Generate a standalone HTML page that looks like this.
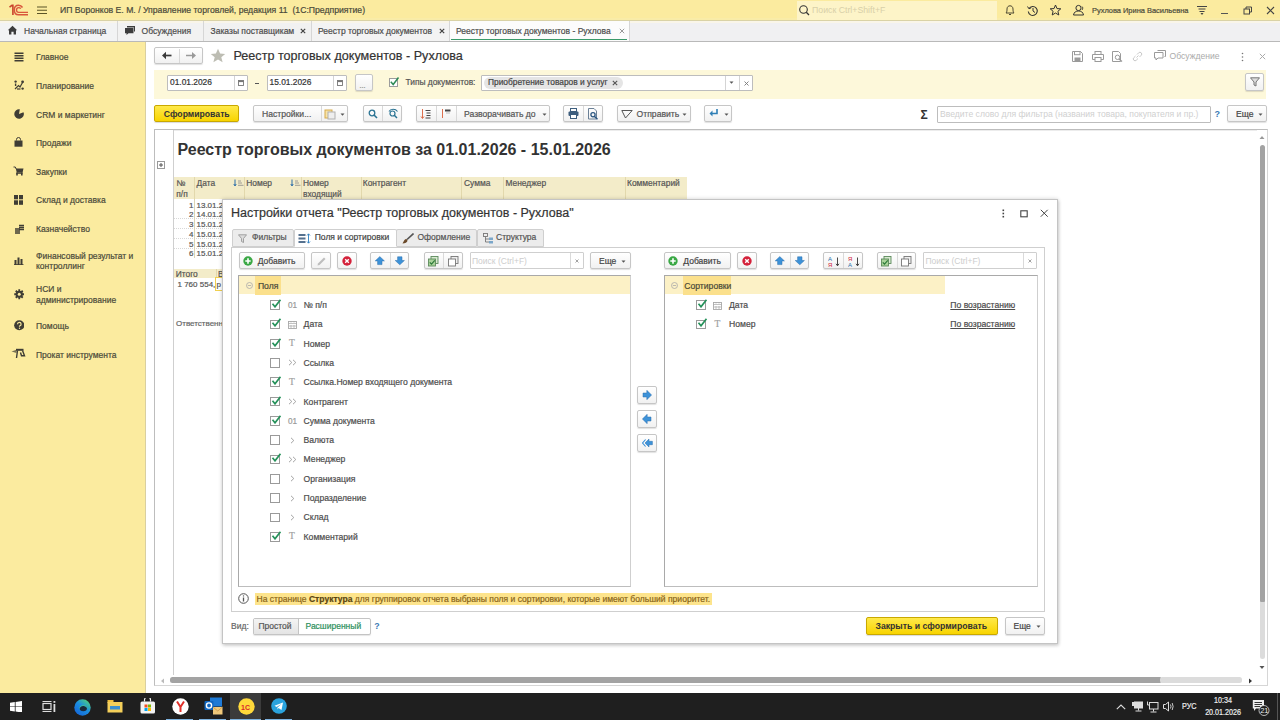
<!DOCTYPE html><html><head><meta charset="utf-8"><style>
*{margin:0;padding:0;box-sizing:border-box}
html,body{width:1280px;height:720px;overflow:hidden;background:#fff;font-family:"Liberation Sans",sans-serif}
.a{position:absolute}
.t{position:absolute;white-space:nowrap;line-height:1;-webkit-text-stroke:0.2px currentColor}
.btn{position:absolute;border:1px solid #c6c6c6;border-radius:2px;background:linear-gradient(#ffffff,#f1f1f1);box-shadow:0 1px 1px rgba(0,0,0,.12)}
.inp{position:absolute;border:1px solid #bdbdbd;background:#fff;border-radius:1px}
</style></head><body><div class="a " style="left:0px;top:0px;width:1280px;height:20px;background:#fbeb9f;"></div>
<div class="a " style="left:0px;top:18px;width:1280px;height:2px;background:#f9eca8;"></div>
<svg class="a" style="left:8px;top:4px;" width="22" height="13" viewBox="0 0 22 13">
<path d="M1.5 3.2 L4 1.3 L4.9 1.3 L4.9 11" stroke="#c8442b" stroke-width="1.6" fill="none"/>
<path d="M14.5 3.5 C13.5 1.8 12 1.2 10.5 1.2 C8 1.2 6.3 3.2 6.3 6 C6.3 8.8 8 10.8 10.5 10.8 L20 10.8" stroke="#d9553b" stroke-width="1.5" fill="none"/>
<path d="M12.8 4.6 C12.2 3.9 11.5 3.6 10.7 3.6 C9.3 3.6 8.5 4.6 8.5 6 C8.5 7.4 9.3 8.4 10.7 8.4 L20 8.4" stroke="#d9553b" stroke-width="1.3" fill="none"/>
</svg>
<svg class="a" style="left:36px;top:5px;" width="12" height="10" viewBox="0 0 12 10"><path d="M1 2h10M1 5.3h10M1 8.5h10" stroke="#5b5426" stroke-width="1.1"/></svg>
<div class="t" style="left:60px;top:6.00px;font-size:8.67px;color:#4a4a3a;font-weight:400;">ИП Воронков Е. М. / Управление торговлей, редакция 11&nbsp; (1С:Предприятие)</div>
<div class="a " style="left:797px;top:1px;width:200px;height:18.5px;background:#fdf4c8;"></div>
<svg class="a" style="left:798px;top:4px;" width="13" height="13" viewBox="0 0 13 13"><circle cx="5.5" cy="5.5" r="3.8" stroke="#333" stroke-width="1.1" fill="none"/><path d="M8.3 8.3 L11 11" stroke="#333" stroke-width="1.3"/></svg>
<div class="t" style="left:812px;top:6.00px;font-size:8.75px;color:#d8d0a8;font-weight:400;-webkit-text-stroke:0;">Поиск Ctrl+Shift+F</div>
<svg class="a" style="left:1004px;top:4px;" width="12" height="12" viewBox="0 0 12 12"><path d="M2 9 C3 8 3 6.5 3 5 C3 3 4.3 1.8 6 1.8 C7.7 1.8 9 3 9 5 C9 6.5 9 8 10 9 Z" stroke="#4a4630" stroke-width="1" fill="none"/><path d="M5 10.5 h2" stroke="#4a4630" stroke-width="1"/></svg>
<svg class="a" style="left:1026px;top:3.5px;" width="14" height="13" viewBox="0 0 14 13"><path d="M3 4.5 A4.5 4.5 0 1 1 2.3 7.5" stroke="#333" stroke-width="1.1" fill="none"/><path d="M1.5 2.5 L3 4.8 L5.3 3.7" stroke="#333" stroke-width="1" fill="none"/><path d="M7 4 V7 L9 8.5" stroke="#333" stroke-width="1" fill="none"/></svg>
<svg class="a" style="left:1049px;top:4px;" width="13" height="12" viewBox="0 0 13 12"><path d="M6.5 1 L8 4.6 L11.8 4.8 L8.9 7.3 L9.8 11 L6.5 9 L3.2 11 L4.1 7.3 L1.2 4.8 L5 4.6 Z" stroke="#333" stroke-width="1" fill="none" stroke-linejoin="round"/></svg>
<svg class="a" style="left:1071.5px;top:4px;" width="14" height="12" viewBox="0 0 14 12"><circle cx="6.5" cy="4" r="2.6" stroke="#333" stroke-width="1" fill="none"/><path d="M1.5 11 C2 8 4 7 6.5 7 C9 7 11 8 11.5 11 Z" stroke="#333" stroke-width="1" fill="none"/><path d="M10 2.5 C11 3 11 5 10 6" stroke="#333" stroke-width="0.9" fill="none"/></svg>
<div class="t" style="left:1092px;top:7.00px;font-size:7.45px;color:#4a4a3a;font-weight:400;">Рухлова Ирина Васильевна</div>
<svg class="a" style="left:1196px;top:4px;" width="12" height="12" viewBox="0 0 12 12"><path d="M1 2.5h10M2.5 5h7M3.5 7.5h5" stroke="#444" stroke-width="1"/><path d="M4.5 9 L7.5 9 L6 11 Z" fill="#444"/></svg>
<div class="a " style="left:1221px;top:12.5px;width:7px;height:1.2px;background:#555;"></div>
<svg class="a" style="left:1243px;top:6px;" width="10" height="9" viewBox="0 0 10 9"><rect x="1" y="3" width="5.5" height="5" stroke="#444" stroke-width="1" fill="none"/><path d="M3 3 V1 H8.5 V6 H6.5" stroke="#444" stroke-width="1" fill="none"/></svg>
<svg class="a" style="left:1266px;top:5.5px;" width="9" height="9" viewBox="0 0 9 9"><path d="M1 1 L8 8 M8 1 L1 8" stroke="#444" stroke-width="1.1"/></svg>
<div class="a " style="left:0px;top:20px;width:1280px;height:21px;background:#f0f0f2;"></div>
<div class="a " style="left:0px;top:20px;width:1280px;height:1px;background:#d9d2a6;"></div>
<div class="a " style="left:0px;top:21px;width:1280px;height:1.5px;background:#f9f5e9;"></div>
<div class="a " style="left:0px;top:41px;width:1280px;height:1px;background:#b9b9b9;"></div>
<div class="a " style="left:0px;top:22.5px;width:117px;height:18.5px;background:#f2f3f4;"></div>
<div class="a " style="left:118px;top:22.5px;width:84.5px;height:18.5px;background:#f2f2f2;"></div>
<div class="a " style="left:203px;top:22.5px;width:108px;height:18.5px;background:#f1f1f1;"></div>
<div class="a " style="left:312px;top:22.5px;width:137px;height:18.5px;background:#f3f3f3;"></div>
<div class="a " style="left:117px;top:21px;width:1px;height:20px;background:#d6d6d6;"></div>
<div class="a " style="left:202.5px;top:21px;width:1px;height:20px;background:#d6d6d6;"></div>
<div class="a " style="left:311px;top:21px;width:1px;height:20px;background:#d6d6d6;"></div>
<div class="a " style="left:449px;top:21px;width:1px;height:20px;background:#d6d6d6;"></div>
<div class="a " style="left:450px;top:21px;width:178.5px;height:20px;background:#fcfcfc;"></div>
<div class="a " style="left:628.5px;top:21px;width:1px;height:20px;background:#d6d6d6;"></div>
<div class="a " style="left:451px;top:38.5px;width:175.5px;height:1.4px;background:#3a9a6a;"></div>
<svg class="a" style="left:6.5px;top:25px;" width="11" height="10" viewBox="0 0 11 10"><path d="M0.8 5.2 L5.5 0.8 L10.2 5.2 L9 5.2 L9 9.5 L6.6 9.5 L6.6 6.8 L4.4 6.8 L4.4 9.5 L2 9.5 L2 5.2 Z" fill="#3d3d3d"/></svg>
<div class="t" style="left:24px;top:27.00px;font-size:8.5px;color:#4d4d4d;font-weight:400;">Начальная страница</div>
<svg class="a" style="left:123.5px;top:25px;" width="12" height="11" viewBox="0 0 12 11"><path d="M3 1 H11 V6.5 H10 V2.5 H3 Z" fill="#3d3d3d"/><path d="M1 3 H9.5 V8.2 H4.5 L2.5 10 L2.5 8.2 H1 Z" fill="#3d3d3d"/></svg>
<div class="t" style="left:141.6px;top:27.00px;font-size:8.5px;color:#4d4d4d;font-weight:400;">Обсуждения</div>
<div class="t" style="left:210.6px;top:27.00px;font-size:8.5px;color:#4d4d4d;font-weight:400;">Заказы поставщикам</div>
<svg class="a" style="left:300px;top:28px;" width="6" height="6" viewBox="0 0 6 6"><path d="M0.8 0.8 L5.2 5.2 M5.2 0.8 L0.8 5.2" stroke="#444" stroke-width="1.2"/></svg>
<div class="t" style="left:318px;top:27.00px;font-size:8.5px;color:#4d4d4d;font-weight:400;">Реестр торговых документов</div>
<svg class="a" style="left:438.5px;top:28px;" width="6" height="6" viewBox="0 0 6 6"><path d="M0.8 0.8 L5.2 5.2 M5.2 0.8 L0.8 5.2" stroke="#444" stroke-width="1.2"/></svg>
<div class="t" style="left:456px;top:27.00px;font-size:8.5px;color:#4d4d4d;font-weight:400;">Реестр торговых документов - Рухлова</div>
<svg class="a" style="left:618.5px;top:28px;" width="6" height="6" viewBox="0 0 6 6"><path d="M0.8 0.8 L5.2 5.2 M5.2 0.8 L0.8 5.2" stroke="#999" stroke-width="1"/></svg>
<div class="a " style="left:0px;top:42px;width:145px;height:651px;background:#fbeb9f;"></div>
<div class="a " style="left:145px;top:42px;width:1px;height:651px;background:#d9cf9f;"></div>
<div class="t" style="left:36px;top:53.00px;font-size:8.5px;color:#4a4a3a;font-weight:400;">Главное</div>
<div class="t" style="left:36px;top:82.00px;font-size:8.5px;color:#4a4a3a;font-weight:400;">Планирование</div>
<div class="t" style="left:36px;top:111.00px;font-size:8.5px;color:#4a4a3a;font-weight:400;">CRM и маркетинг</div>
<div class="t" style="left:36px;top:139.00px;font-size:8.5px;color:#4a4a3a;font-weight:400;">Продажи</div>
<div class="t" style="left:36px;top:168.00px;font-size:8.5px;color:#4a4a3a;font-weight:400;">Закупки</div>
<div class="t" style="left:36px;top:196.00px;font-size:8.5px;color:#4a4a3a;font-weight:400;">Склад и доставка</div>
<div class="t" style="left:36px;top:225.00px;font-size:8.5px;color:#4a4a3a;font-weight:400;">Казначейство</div>
<div class="t" style="left:36px;top:252.00px;font-size:8.5px;color:#4a4a3a;font-weight:400;">Финансовый результат и</div>
<div class="t" style="left:36px;top:262.00px;font-size:8.5px;color:#4a4a3a;font-weight:400;">контроллинг</div>
<div class="t" style="left:36px;top:285.00px;font-size:8.5px;color:#4a4a3a;font-weight:400;">НСИ и</div>
<div class="t" style="left:36px;top:296.00px;font-size:8.5px;color:#4a4a3a;font-weight:400;">администрирование</div>
<div class="t" style="left:36px;top:322.00px;font-size:8.5px;color:#4a4a3a;font-weight:400;">Помощь</div>
<div class="t" style="left:36px;top:351.00px;font-size:8.5px;color:#4a4a3a;font-weight:400;">Прокат инструмента</div>
<svg class="a" style="left:13.5px;top:51.5px;" width="10" height="10" viewBox="0 0 10 10"><path d="M0.5 1.2h9M0.5 3.7h9M0.5 6.2h9M0.5 8.7h9" stroke="#3f3d35" stroke-width="1.4"/></svg>
<svg class="a" style="left:13.5px;top:80px;" width="10" height="10" viewBox="0 0 10 10"><circle cx="1.6" cy="1.6" r="1.2" fill="#3f3d35"/><rect x="0.9" y="3.5" width="1.4" height="2.5" fill="#3f3d35"/><path d="M1 9 L4.5 5.5 L6 7 L8.8 2" stroke="#3f3d35" stroke-width="1.2" fill="none"/><circle cx="8.6" cy="1.8" r="1.4" fill="#3f3d35"/><circle cx="8.6" cy="8.6" r="1.2" fill="#3f3d35"/><rect x="3" y="8.4" width="3.5" height="1.2" fill="#3f3d35"/></svg>
<svg class="a" style="left:13.5px;top:109.2px;" width="10" height="10" viewBox="0 0 10 10"><path d="M5 5 L9.5 3.2 A4.8 4.8 0 1 1 5.8 0.3 Z" fill="#3f3d35"/></svg>
<svg class="a" style="left:14px;top:137px;" width="9" height="10" viewBox="0 0 9 10"><path d="M2.5 3.5 V2.5 A2 2 0 0 1 6.5 2.5 V3.5" stroke="#3f3d35" stroke-width="1" fill="none"/><rect x="0.5" y="3.5" width="8" height="6.2" fill="#3f3d35"/></svg>
<svg class="a" style="left:13px;top:166px;" width="11" height="10" viewBox="0 0 11 10"><path d="M0.5 1 H2.3 L3.2 3" stroke="#3f3d35" stroke-width="1" fill="none"/><path d="M2.8 2.5 H10.5 L9.5 6.8 H3.8 Z" fill="#3f3d35"/><rect x="3.2" y="6.5" width="1.6" height="3" fill="#3f3d35"/><rect x="8" y="6.5" width="1.6" height="3" fill="#3f3d35"/><rect x="3.5" y="6.8" width="6" height="1" fill="#3f3d35"/></svg>
<svg class="a" style="left:14px;top:194.5px;" width="9" height="10" viewBox="0 0 9 10"><rect x="0" y="0" width="4" height="4.3" fill="#3f3d35"/><rect x="5" y="0" width="4" height="4.3" fill="#3f3d35"/><rect x="0" y="5.3" width="4" height="4.5" fill="#3f3d35"/><rect x="5" y="5.3" width="4" height="4.5" fill="#3f3d35"/></svg>
<svg class="a" style="left:13.5px;top:223.5px;" width="11" height="11" viewBox="0 0 11 11"><path d="M5 1.5 H10 M5 3.5 H10 M5 5.5 H10" stroke="#3f3d35" stroke-width="1.4"/><path d="M1 5 H6 M1 7 H6 M1 9 H6" stroke="#3f3d35" stroke-width="1.4"/></svg>
<svg class="a" style="left:14px;top:256.5px;" width="10" height="8" viewBox="0 0 10 8"><rect x="0.5" y="3" width="2" height="5" fill="#3f3d35"/><rect x="3.5" y="0.5" width="2" height="7.5" fill="#3f3d35"/><rect x="6.5" y="2" width="2" height="6" fill="#3f3d35"/><rect x="0" y="7.2" width="9.5" height="0.9" fill="#3f3d35"/></svg>
<svg class="a" style="left:13.5px;top:289px;" width="10.5" height="10.5" viewBox="0 0 10.5 10.5"><g transform="translate(5.25 5.25)"><circle r="3.6" fill="#3f3d35"/><path d="M0 -5 V5 M-5 0 H5 M-3.5 -3.5 L3.5 3.5 M3.5 -3.5 L-3.5 3.5" stroke="#3f3d35" stroke-width="1.8"/><circle r="1.5" fill="#fbeb9f"/></g></svg>
<svg class="a" style="left:13.5px;top:320px;" width="10.5" height="10.5" viewBox="0 0 10.5 10.5"><circle cx="5.25" cy="5.25" r="5.1" fill="#3f3d35"/><path d="M3.5 4.2 A1.8 1.8 0 1 1 5.5 6 V6.8" stroke="#fbeb9f" stroke-width="1.2" fill="none"/><circle cx="5.5" cy="8.3" r="0.7" fill="#fbeb9f"/></svg>
<svg class="a" style="left:11px;top:348px;" width="16" height="11" viewBox="0 0 16 11"><path d="M0.5 3.5 L5.5 1.8 L5.5 5 Z" fill="#3f3d35" opacity="0.7"/><rect x="5" y="0.8" width="7.5" height="2" fill="#3f3d35"/><path d="M6.5 2.5 L5.5 10 M11.5 2.5 L13.5 7.8 L10.5 7.8 L9.5 4.5" stroke="#3f3d35" stroke-width="1.4" fill="none"/></svg>
<div class="btn" style="left:154px;top:47px;width:48.5px;height:16.6px"></div>
<div class="a " style="left:178.5px;top:48.5px;width:1px;height:14px;background:#d8d8d8;"></div>
<svg class="a" style="left:161px;top:50px;" width="12" height="11" viewBox="0 0 12 11"><path d="M3 5.5 H10.5" stroke="#3a3a3a" stroke-width="1.7"/><path d="M1 5.5 L5 1.8 L5 9.2 Z" fill="#3a3a3a"/></svg>
<svg class="a" style="left:185px;top:50px;" width="12" height="11" viewBox="0 0 12 11"><path d="M1 5.5 H8.5" stroke="#9a9a9a" stroke-width="1.5"/><path d="M11 5.5 L7 2 L7 9 Z" fill="#9a9a9a"/></svg>
<svg class="a" style="left:210px;top:47.5px;" width="16" height="15" viewBox="0 0 16 15"><path d="M8 0.8 L10.1 5.5 L15.2 5.9 L11.3 9.2 L12.6 14.2 L8 11.5 L3.4 14.2 L4.7 9.2 L0.8 5.9 L5.9 5.5 Z" fill="#bdbdb3"/></svg>
<div class="t" style="left:233.5px;top:50.00px;font-size:12.6px;color:#333;font-weight:400;">Реестр торговых документов - Рухлова</div>
<svg class="a" style="left:1071.5px;top:50.5px;" width="11" height="11" viewBox="0 0 11 11"><path d="M0.5 0.5 H8.5 L10.5 2.5 V10.5 H0.5 Z" stroke="#9a9a9a" stroke-width="1" fill="none"/><rect x="2.5" y="0.5" width="5.5" height="3.2" stroke="#9a9a9a" stroke-width="1" fill="none"/><rect x="2.5" y="6.5" width="6" height="4" fill="#9a9a9a"/></svg>
<svg class="a" style="left:1091.5px;top:50.5px;" width="12" height="11" viewBox="0 0 12 11"><rect x="3" y="0.5" width="6" height="3" stroke="#9a9a9a" stroke-width="1" fill="none"/><path d="M0.5 3.5 H11.5 V8.5 H0.5 Z" stroke="#9a9a9a" stroke-width="1" fill="none"/><rect x="3" y="6.5" width="6" height="4" stroke="#9a9a9a" stroke-width="1" fill="#fff"/></svg>
<svg class="a" style="left:1111.5px;top:50.5px;" width="11" height="11" viewBox="0 0 11 11"><path d="M0.5 0.5 H6.5 L8.5 2.5 V10.5 H0.5 Z" stroke="#9a9a9a" stroke-width="1" fill="none"/><circle cx="5.5" cy="6.3" r="2.2" stroke="#9a9a9a" stroke-width="1" fill="none"/><path d="M7 8 L10 10.5" stroke="#9a9a9a" stroke-width="1.3"/></svg>
<svg class="a" style="left:1132px;top:50.5px;" width="11" height="11" viewBox="0 0 11 11"><path d="M4.5 6.5 L6.5 4.5 M3.5 5 L1.8 6.7 A1.6 1.6 0 0 0 4.3 9.2 L6 7.5 M7.5 6 L9.2 4.3 A1.6 1.6 0 0 0 6.7 1.8 L5 3.5" stroke="#c9c9c9" stroke-width="1" fill="none"/></svg>
<svg class="a" style="left:1153.5px;top:50px;" width="12" height="11" viewBox="0 0 12 11"><path d="M3.5 0.5 H11.5 V6.5 H10.5" stroke="#9a9a9a" stroke-width="1" fill="none"/><path d="M0.5 2.5 H9 V8 H4 L2 10 V8 H0.5 Z" stroke="#9a9a9a" stroke-width="1" fill="none"/></svg>
<div class="t" style="left:1169.5px;top:52.00px;font-size:8.6px;color:#ababab;font-weight:400;-webkit-text-stroke:0;">Обсуждение</div>
<svg class="a" style="left:1240.5px;top:51.5px;" width="3" height="10" viewBox="0 0 3 10"><circle cx="1.5" cy="1.5" r="0.8" fill="#777"/><circle cx="1.5" cy="5" r="0.8" fill="#777"/><circle cx="1.5" cy="8.5" r="0.8" fill="#777"/></svg>
<svg class="a" style="left:1259px;top:53px;" width="7" height="7" viewBox="0 0 7 7"><path d="M0.8 0.8 L6.2 6.2 M6.2 0.8 L0.8 6.2" stroke="#aaa" stroke-width="1"/></svg>
<div class="a " style="left:154px;top:70px;width:1112px;height:29px;background:#fdf8da;"></div>
<div class="inp" style="left:167px;top:74.5px;width:80.5px;height:16px"></div>
<div class="a " style="left:233.5px;top:75.5px;width:1px;height:14px;background:#d4d4d4;"></div>
<svg class="a" style="left:237.5px;top:79.5px;" width="6" height="6" viewBox="0 0 6 6"><rect x="0.5" y="0.5" width="5" height="5" stroke="#777" stroke-width="0.9" fill="none"/><rect x="0.5" y="0.5" width="5" height="1.6" fill="#777"/></svg>
<div class="t" style="left:170px;top:78.00px;font-size:8.4px;color:#333;font-weight:400;">01.01.2026</div>
<div class="a " style="left:255px;top:82.5px;width:4px;height:1px;background:#555;"></div>
<div class="inp" style="left:266.5px;top:74.5px;width:80.5px;height:16px"></div>
<div class="a " style="left:333.0px;top:75.5px;width:1px;height:14px;background:#d4d4d4;"></div>
<svg class="a" style="left:337.0px;top:79.5px;" width="6" height="6" viewBox="0 0 6 6"><rect x="0.5" y="0.5" width="5" height="5" stroke="#777" stroke-width="0.9" fill="none"/><rect x="0.5" y="0.5" width="5" height="1.6" fill="#777"/></svg>
<div class="t" style="left:269.5px;top:78.00px;font-size:8.4px;color:#333;font-weight:400;">15.01.2026</div>
<div class="btn" style="left:354.5px;top:74px;width:18.5px;height:17px"></div>
<div class="t" style="left:359.5px;top:82.00px;font-size:7px;color:#888;font-weight:400;">...</div>
<div class="a" style="left:388.5px;top:77.5px;width:9.5px;height:9.5px;border:1px solid #9c9c9c;background:#fff"></div>
<svg class="a" style="left:389px;top:75.5px;" width="11" height="11" viewBox="0 0 11 11"><path d="M1.8 5.8 L4.2 8.5 L9.5 1.5" stroke="#2e8b57" stroke-width="1.5" fill="none"/></svg>
<div class="t" style="left:405.5px;top:78.00px;font-size:8.4px;color:#555;font-weight:400;">Типы документов:</div>
<div class="inp" style="left:480.5px;top:74.5px;width:272px;height:16px"></div>
<div class="a " style="left:484px;top:76.5px;width:139px;height:12px;background:#e5e5e5;border-radius:6px;"></div>
<div class="t" style="left:488px;top:78.00px;font-size:8.4px;color:#444;font-weight:400;">Приобретение товаров и услуг</div>
<svg class="a" style="left:612px;top:79.5px;" width="6" height="6" viewBox="0 0 6 6"><path d="M0.8 0.8 L5.2 5.2 M5.2 0.8 L0.8 5.2" stroke="#555" stroke-width="1.1"/></svg>
<div class="a " style="left:725px;top:75.5px;width:1px;height:14px;background:#d4d4d4;"></div>
<svg class="a" style="left:729px;top:81px;" width="5" height="3" viewBox="0 0 5 3"><path d="M0.5 0.5 H4.5 L2.5 2.8 Z" fill="#555"/></svg>
<div class="a " style="left:739px;top:75.5px;width:1px;height:14px;background:#d4d4d4;"></div>
<svg class="a" style="left:743.5px;top:80.5px;" width="5" height="5" viewBox="0 0 5 5"><path d="M0.5 0.5 L4.5 4.5 M4.5 0.5 L0.5 4.5" stroke="#777" stroke-width="0.9"/></svg>
<div class="btn" style="left:1244.5px;top:73px;width:19.5px;height:18px"></div>
<svg class="a" style="left:1249.5px;top:77px;" width="10" height="10" viewBox="0 0 10 10"><path d="M0.5 0.8 H9.5 L6 5 V9 L4 8 V5 Z" stroke="#777" stroke-width="1" fill="#ddd"/></svg>
<div class="a" style="left:154px;top:105px;width:85px;height:17px;border:1px solid #c9a800;border-radius:2px;background:linear-gradient(#ffe94a,#f8d400);box-shadow:0 1px 1px rgba(0,0,0,.15)"></div>
<div class="t" style="left:163.75px;top:110.00px;font-size:8.67px;color:#333;font-weight:700;-webkit-text-stroke:0;">Сформировать</div>
<div class="btn" style="left:253px;top:105px;width:95px;height:17px"></div>
<div class="a " style="left:320.5px;top:106px;width:1px;height:15px;background:#d8d8d8;"></div>
<div class="t" style="left:262px;top:110.00px;font-size:8.6px;color:#555;font-weight:400;">Настройки...</div>
<svg class="a" style="left:324px;top:107.5px;" width="13" height="12" viewBox="0 0 13 12"><rect x="1" y="2" width="7" height="8" stroke="#d6a94a" stroke-width="1" fill="#f7e3a8"/><rect x="4" y="4" width="7" height="7" stroke="#b0b0b0" stroke-width="1" fill="#eee"/></svg>
<svg class="a" style="left:340px;top:112.5px;" width="5" height="3" viewBox="0 0 5 3"><path d="M0.5 0.5 H4.5 L2.5 2.8 Z" fill="#555"/></svg>
<div class="btn" style="left:362.5px;top:105px;width:39px;height:17px"></div>
<div class="a " style="left:382px;top:106px;width:1px;height:15px;background:#d8d8d8;"></div>
<svg class="a" style="left:367.5px;top:108.5px;" width="10" height="10" viewBox="0 0 10 10"><circle cx="4" cy="4" r="2.8" stroke="#2a7393" stroke-width="1.3" fill="none"/><path d="M6 6 L9 9" stroke="#2a7393" stroke-width="1.6"/></svg>
<svg class="a" style="left:387.5px;top:107.5px;" width="11" height="11" viewBox="0 0 11 11"><circle cx="4.5" cy="5.5" r="2.5" stroke="#2a7393" stroke-width="1.2" fill="none"/><path d="M6.3 7.3 L9 10" stroke="#2a7393" stroke-width="1.5"/><path d="M1 3.5 C2.5 0.5 7.5 0.5 9.5 3.5" stroke="#2a7393" stroke-width="1.1" fill="none"/></svg>
<div class="btn" style="left:415.5px;top:105px;width:134px;height:17px"></div>
<div class="a " style="left:435.5px;top:106px;width:1px;height:15px;background:#d8d8d8;"></div>
<div class="a " style="left:455.5px;top:106px;width:1px;height:15px;background:#d8d8d8;"></div>
<svg class="a" style="left:420px;top:107.5px;" width="12" height="12" viewBox="0 0 12 12"><path d="M2.5 1 V10 M1 8.5 L2.5 10.5 L4 8.5" stroke="#d9603b" stroke-width="0.9" fill="none"/><path d="M5.5 2.5 H10.5 M6.5 5 H10.5 M6.5 7.5 H10.5 M5.5 10 H10.5" stroke="#444" stroke-width="1.1"/></svg>
<svg class="a" style="left:439.5px;top:107.5px;" width="12" height="12" viewBox="0 0 12 12"><path d="M2.5 1 V10" stroke="#d9603b" stroke-width="0.9"/><path d="M5 2.5 H10.5" stroke="#444" stroke-width="2"/><path d="M6 5 H10" stroke="#aaa" stroke-width="0.8"/></svg>
<div class="t" style="left:464px;top:110.00px;font-size:8.6px;color:#555;font-weight:400;">Разворачивать до</div>
<svg class="a" style="left:541.5px;top:112.5px;" width="5" height="3" viewBox="0 0 5 3"><path d="M0.5 0.5 H4.5 L2.5 2.8 Z" fill="#555"/></svg>
<div class="btn" style="left:563px;top:105px;width:40px;height:17px"></div>
<div class="a " style="left:583px;top:106px;width:1px;height:15px;background:#d8d8d8;"></div>
<svg class="a" style="left:568px;top:108px;" width="11" height="11" viewBox="0 0 11 11"><rect x="2.5" y="0.5" width="6" height="3" stroke="#3d5d7d" stroke-width="1" fill="none"/><rect x="0.5" y="3.5" width="10" height="4.5" rx="1" fill="#3d5d7d"/><rect x="2.5" y="6.5" width="6" height="4" stroke="#3d5d7d" stroke-width="1" fill="#fff"/></svg>
<svg class="a" style="left:587.5px;top:107.5px;" width="11" height="12" viewBox="0 0 11 12"><path d="M0.5 0.5 H6 L8.5 3 V11 H0.5 Z" stroke="#6b8096" stroke-width="1" fill="none"/><circle cx="5" cy="6.8" r="2.1" stroke="#2a5580" stroke-width="1.3" fill="none"/><path d="M6.5 8.5 L9.5 11.2" stroke="#2a5580" stroke-width="1.5"/></svg>
<div class="btn" style="left:617px;top:105px;width:73.5px;height:17px"></div>
<svg class="a" style="left:620.5px;top:108.5px;" width="12" height="10" viewBox="0 0 12 10"><path d="M0.8 1.5 L11.2 1.5 L4.5 9 Z" stroke="#555" stroke-width="1" fill="none" stroke-linejoin="round"/></svg>
<div class="t" style="left:636.6px;top:110.00px;font-size:8.6px;color:#555;font-weight:400;">Отправить</div>
<svg class="a" style="left:682px;top:112.5px;" width="5" height="3" viewBox="0 0 5 3"><path d="M0.5 0.5 H4.5 L2.5 2.8 Z" fill="#555"/></svg>
<div class="btn" style="left:704px;top:105px;width:27.5px;height:17px"></div>
<svg class="a" style="left:709px;top:108px;" width="10" height="10" viewBox="0 0 10 10"><path d="M8 1 V5.5 H3" stroke="#2f7fb6" stroke-width="1.6" fill="none"/><path d="M0.5 5.5 L3.5 2.5 L3.5 8.5 Z" fill="#2f7fb6"/></svg>
<svg class="a" style="left:723.5px;top:112.5px;" width="5" height="3" viewBox="0 0 5 3"><path d="M0.5 0.5 H4.5 L2.5 2.8 Z" fill="#555"/></svg>
<div class="t" style="left:920.5px;top:109.00px;font-size:12px;color:#333;font-weight:700;-webkit-text-stroke:0;">Σ</div>
<div class="inp" style="left:937px;top:106px;width:273.5px;height:17px"></div>
<div class="t" style="left:940px;top:110.00px;font-size:8.6px;color:#d0d0d0;font-weight:400;-webkit-text-stroke:0;">Введите слово для фильтра (названия товара, покупателя и пр.)</div>
<div class="t" style="left:1214.5px;top:110.00px;font-size:9px;color:#3b7ab5;font-weight:700;-webkit-text-stroke:0;">?</div>
<div class="btn" style="left:1227px;top:105px;width:40px;height:17px"></div>
<div class="t" style="left:1236px;top:110.00px;font-size:8.6px;color:#444;font-weight:400;">Еще</div>
<svg class="a" style="left:1257.5px;top:112.5px;" width="5" height="3" viewBox="0 0 5 3"><path d="M0.5 0.5 H4.5 L2.5 2.8 Z" fill="#555"/></svg>
<div class="a " style="left:154px;top:129px;width:1113.5px;height:557px;border:1px solid #bdbdbd;border-right-color:#d6d6d6;border-bottom-color:#d6d6d6;background:#fff;"></div>
<div class="a " style="left:173px;top:130px;width:1px;height:545px;background:#cfcfcf;"></div>
<div class="a " style="left:174px;top:130px;width:1083px;height:1px;background:#ececec;"></div>
<div class="t" style="left:177.5px;top:142.00px;font-size:16px;color:#333;font-weight:700;-webkit-text-stroke:0;">Реестр торговых документов за 01.01.2026 - 15.01.2026</div>
<svg class="a" style="left:156.5px;top:160.5px;" width="8" height="8" viewBox="0 0 8 8"><rect x="0.5" y="0.5" width="7" height="7" stroke="#999" stroke-width="1" fill="#fff"/><path d="M2 4 H6 M4 2 V6" stroke="#555" stroke-width="1"/></svg>
<svg class="a" style="left:1259px;top:135px;" width="6" height="5" viewBox="0 0 6 5"><path d="M0.5 4 L3 1 L5.5 4 Z" fill="#999"/></svg>
<div class="a " style="left:1259.5px;top:145px;width:5px;height:458px;background:#a3a3a3;border-radius:2.5px;"></div>
<div class="a " style="left:1259.5px;top:602px;width:5px;height:57px;background:#dcdcdc;border-radius:0 0 2.5px 2.5px;"></div>
<svg class="a" style="left:1259px;top:665px;" width="6" height="5" viewBox="0 0 6 5"><path d="M0.5 1 L3 4 L5.5 1 Z" fill="#555"/></svg>
<svg class="a" style="left:160px;top:677.5px;" width="5" height="6" viewBox="0 0 5 6"><path d="M4 0.5 L1 3 L4 5.5 Z" fill="#bbb"/></svg>
<div class="a " style="left:170px;top:677px;width:992px;height:5.5px;background:#a3a3a3;border-radius:2.5px;"></div>
<div class="a " style="left:1160px;top:677px;width:82px;height:5.5px;background:#dcdcdc;border-radius:2.5px;"></div>
<svg class="a" style="left:1247.5px;top:677.5px;" width="5" height="6" viewBox="0 0 5 6"><path d="M1 0.5 L4 3 L1 5.5 Z" fill="#333"/></svg>
<div class="a " style="left:174px;top:176.5px;width:513px;height:22.5px;background:#f3ecc9;"></div>
<div class="a " style="left:194.4px;top:176.5px;width:0.8px;height:22.5px;background:#e2d8ac;"></div>
<div class="a " style="left:244.4px;top:176.5px;width:0.8px;height:22.5px;background:#e2d8ac;"></div>
<div class="a " style="left:301px;top:176.5px;width:0.8px;height:22.5px;background:#e2d8ac;"></div>
<div class="a " style="left:360.6px;top:176.5px;width:0.8px;height:22.5px;background:#e2d8ac;"></div>
<div class="a " style="left:461.3px;top:176.5px;width:0.8px;height:22.5px;background:#e2d8ac;"></div>
<div class="a " style="left:502.5px;top:176.5px;width:0.8px;height:22.5px;background:#e2d8ac;"></div>
<div class="a " style="left:624.7px;top:176.5px;width:0.8px;height:22.5px;background:#e2d8ac;"></div>
<div class="t" style="left:176.3px;top:179.00px;font-size:8.4px;color:#555;font-weight:400;">№</div>
<div class="t" style="left:176.3px;top:190.00px;font-size:8.4px;color:#555;font-weight:400;">п/п</div>
<div class="t" style="left:196.5px;top:179.00px;font-size:8.4px;color:#555;font-weight:400;">Дата</div>
<div class="t" style="left:246.2px;top:179.00px;font-size:8.4px;color:#555;font-weight:400;">Номер</div>
<div class="t" style="left:303px;top:179.00px;font-size:8.4px;color:#555;font-weight:400;">Номер</div>
<div class="t" style="left:303px;top:190.00px;font-size:8.4px;color:#555;font-weight:400;">входящий</div>
<div class="t" style="left:362.75px;top:179.00px;font-size:8.4px;color:#555;font-weight:400;">Контрагент</div>
<div class="t" style="left:464px;top:179.00px;font-size:8.4px;color:#555;font-weight:400;">Сумма</div>
<div class="t" style="left:505.5px;top:179.00px;font-size:8.4px;color:#555;font-weight:400;">Менеджер</div>
<div class="t" style="left:627px;top:179.00px;font-size:8.4px;color:#555;font-weight:400;">Комментарий</div>
<svg class="a" style="left:233px;top:178.5px;" width="12" height="8" viewBox="0 0 12 8"><path d="M2 0.5 V6.5 M0.8 5 L2 7 L3.2 5" stroke="#2d6fa8" stroke-width="1" fill="none"/><path d="M5 2 H8 M5 4 H9 M5 6.3 H10.5" stroke="#888" stroke-width="0.8"/></svg>
<svg class="a" style="left:289.5px;top:178.5px;" width="12" height="8" viewBox="0 0 12 8"><path d="M2 0.5 V6.5 M0.8 5 L2 7 L3.2 5" stroke="#2d6fa8" stroke-width="1" fill="none"/><path d="M5 2 H8 M5 4 H9 M5 6.3 H10.5" stroke="#888" stroke-width="0.8"/></svg>
<div class="t" style="right:1086.5px;top:202.00px;font-size:8px;color:#555;font-weight:400;">1</div>
<div class="t" style="left:196.5px;top:202.00px;font-size:8px;color:#555;font-weight:400;">13.01.20</div>
<div class="a " style="left:174px;top:208.6px;width:48px;height:0.8px;background:repeating-linear-gradient(90deg,#d8d8d8 0 1px,transparent 1px 2px);"></div>
<div class="t" style="right:1086.5px;top:211.00px;font-size:8px;color:#555;font-weight:400;">2</div>
<div class="t" style="left:196.5px;top:211.00px;font-size:8px;color:#555;font-weight:400;">14.01.20</div>
<div class="a " style="left:174px;top:218.4px;width:48px;height:0.8px;background:repeating-linear-gradient(90deg,#d8d8d8 0 1px,transparent 1px 2px);"></div>
<div class="t" style="right:1086.5px;top:221.00px;font-size:8px;color:#555;font-weight:400;">3</div>
<div class="t" style="left:196.5px;top:221.00px;font-size:8px;color:#555;font-weight:400;">15.01.20</div>
<div class="a " style="left:174px;top:228.2px;width:48px;height:0.8px;background:repeating-linear-gradient(90deg,#d8d8d8 0 1px,transparent 1px 2px);"></div>
<div class="t" style="right:1086.5px;top:231.00px;font-size:8px;color:#555;font-weight:400;">4</div>
<div class="t" style="left:196.5px;top:231.00px;font-size:8px;color:#555;font-weight:400;">15.01.20</div>
<div class="a " style="left:174px;top:238.0px;width:48px;height:0.8px;background:repeating-linear-gradient(90deg,#d8d8d8 0 1px,transparent 1px 2px);"></div>
<div class="t" style="right:1086.5px;top:241.00px;font-size:8px;color:#555;font-weight:400;">5</div>
<div class="t" style="left:196.5px;top:241.00px;font-size:8px;color:#555;font-weight:400;">15.01.20</div>
<div class="a " style="left:174px;top:247.79999999999998px;width:48px;height:0.8px;background:repeating-linear-gradient(90deg,#d8d8d8 0 1px,transparent 1px 2px);"></div>
<div class="t" style="right:1086.5px;top:250.00px;font-size:8px;color:#555;font-weight:400;">6</div>
<div class="t" style="left:196.5px;top:250.00px;font-size:8px;color:#555;font-weight:400;">15.01.20</div>
<div class="a " style="left:174px;top:257.59999999999997px;width:48px;height:0.8px;background:repeating-linear-gradient(90deg,#d8d8d8 0 1px,transparent 1px 2px);"></div>
<div class="a " style="left:194.4px;top:199.2px;width:0.8px;height:59px;background:#ddd5b4;"></div>
<div class="a " style="left:174px;top:268.6px;width:48px;height:9.7px;background:#f3ecc9;"></div>
<div class="t" style="left:175.8px;top:270.00px;font-size:8.4px;color:#555;font-weight:400;">Итого</div>
<div class="a " style="left:216.3px;top:268.6px;width:0.8px;height:9.7px;background:#e2d8ac;"></div>
<div class="t" style="left:218px;top:270.00px;font-size:8.4px;color:#555;font-weight:400;">В</div>
<div class="t" style="left:177.5px;top:281.00px;font-size:8px;color:#555;font-weight:400;">1 760 554,8</div>
<div class="a " style="left:215.2px;top:276.5px;width:7px;height:14px;border:1px solid #f0d050;border-right:none;background:#fff;"></div>
<div class="t" style="left:216.5px;top:281.00px;font-size:8px;color:#555;font-weight:400;">р</div>
<div class="t" style="left:176px;top:320.00px;font-size:8px;color:#666;font-weight:400;">Ответственн</div>
<div class="a" style="left:222px;top:198.7px;width:836px;height:445px;background:#fff;border:1px solid #c4c4c4;box-shadow:0 0 4px rgba(0,0,0,.18), 1px 2px 3px rgba(0,0,0,.12)"></div>
<div class="t" style="left:231px;top:207.00px;font-size:12.5px;color:#333;font-weight:400;">Настройки отчета "Реестр торговых документов - Рухлова"</div>
<svg class="a" style="left:1001.5px;top:208.5px;" width="3" height="9" viewBox="0 0 3 9"><rect x="0.5" y="0.5" width="1.6" height="1.6" fill="#444"/><rect x="0.5" y="3.7" width="1.6" height="1.6" fill="#444"/><rect x="0.5" y="6.9" width="1.6" height="1.6" fill="#444"/></svg>
<svg class="a" style="left:1019.5px;top:209.5px;" width="8" height="8" viewBox="0 0 8 8"><rect x="0.8" y="0.8" width="6.4" height="6" stroke="#444" stroke-width="1.1" fill="none"/></svg>
<svg class="a" style="left:1040px;top:208.5px;" width="8.5" height="8.5" viewBox="0 0 8.5 8.5"><path d="M0.8 0.8 L7.7 7.7 M7.7 0.8 L0.8 7.7" stroke="#444" stroke-width="1"/></svg>
<div class="a " style="left:231px;top:246.5px;width:814px;height:365px;border:1px solid #cfcfcf;"></div>
<div class="a" style="left:232px;top:229px;width:61.5px;height:17.5px;background:#ececec;border:1px solid #cfcfcf;border-radius:2px 2px 0 0"></div>
<div class="t" style="left:252px;top:233.00px;font-size:8.5px;color:#555;font-weight:400;">Фильтры</div>
<div class="a" style="left:396px;top:229px;width:80.5px;height:17.5px;background:#ececec;border:1px solid #cfcfcf;border-radius:2px 2px 0 0"></div>
<div class="t" style="left:417.5px;top:233.00px;font-size:8.5px;color:#555;font-weight:400;">Оформление</div>
<div class="a" style="left:476.5px;top:229px;width:67.5px;height:17.5px;background:#ececec;border:1px solid #cfcfcf;border-radius:2px 2px 0 0"></div>
<div class="t" style="left:496px;top:233.00px;font-size:8.5px;color:#555;font-weight:400;">Структура</div>
<div class="a" style="left:293.5px;top:229px;width:103px;height:18px;background:#fff;border:1px solid #cfcfcf;border-bottom:1px solid #fff;border-radius:2px 2px 0 0"></div>
<div class="t" style="left:314.75px;top:233.00px;font-size:8.5px;color:#444;font-weight:400;">Поля и сортировки</div>
<svg class="a" style="left:238px;top:233.5px;" width="9" height="9" viewBox="0 0 9 9"><path d="M0.5 0.8 H8.5 L5.5 4.5 V8.5 L3.5 7.5 V4.5 Z" stroke="#999" stroke-width="0.9" fill="#ddd"/></svg>
<svg class="a" style="left:298px;top:232.5px;" width="13" height="11" viewBox="0 0 13 11"><rect x="0.5" y="1" width="7" height="2" fill="#55718f"/><rect x="0.5" y="4.5" width="7" height="2" fill="#55718f"/><rect x="0.5" y="8" width="7" height="2" fill="#55718f"/><path d="M10.5 1 V10 M9 2.5 L10.5 0.8 L12 2.5 M9 8.5 L10.5 10.2 L12 8.5" stroke="#2d7fc0" stroke-width="0.9" fill="none"/></svg>
<svg class="a" style="left:402px;top:232.5px;" width="12" height="11" viewBox="0 0 12 11"><path d="M11.5 0.5 L5 6.5" stroke="#555" stroke-width="1.6"/><path d="M4.5 6 C2.5 6 2 8 0.5 10.5 C3 10.5 5.5 9.5 5.5 7.5 Z" fill="#6b4a2a"/></svg>
<svg class="a" style="left:482.5px;top:232.5px;" width="11" height="11" viewBox="0 0 11 11"><rect x="0.5" y="0.5" width="4" height="3" stroke="#777" stroke-width="0.9" fill="#eee"/><path d="M2.5 3.5 V9 H6 M2.5 6 H6" stroke="#777" stroke-width="0.9" fill="none"/><rect x="6" y="4.5" width="4" height="2.5" fill="#7aa6c9"/><rect x="6" y="8" width="4" height="2.5" fill="#7aa6c9"/></svg>
<div class="btn" style="left:238.5px;top:252px;width:66px;height:17px"></div>
<svg class="a" style="left:242.8px;top:256px;" width="10" height="10" viewBox="0 0 10 10"><circle cx="5" cy="5" r="4.7" fill="#3aa845"/><path d="M5 2.3 V7.7 M2.3 5 H7.7" stroke="#fff" stroke-width="1.6"/></svg>
<div class="t" style="left:257.75px;top:257.00px;font-size:8.5px;color:#444;font-weight:400;">Добавить</div>
<div class="btn" style="left:311px;top:252px;width:19.5px;height:17px"></div>
<svg class="a" style="left:315.5px;top:256px;" width="11" height="11" viewBox="0 0 11 11"><path d="M1.5 9.5 L2 7.5 L8 1.5 L9.5 3 L3.5 9 Z" fill="#bdbdbd"/></svg>
<div class="btn" style="left:336.8px;top:252px;width:19.8px;height:17px"></div>
<svg class="a" style="left:341.8px;top:256px;" width="10" height="10" viewBox="0 0 10 10"><circle cx="5" cy="5" r="4.7" fill="#d4213a"/><path d="M3.2 3.2 L6.8 6.8 M6.8 3.2 L3.2 6.8" stroke="#fff" stroke-width="1.4"/></svg>
<div class="btn" style="left:370.3px;top:252px;width:39px;height:17px"></div>
<div class="a " style="left:390.3px;top:253px;width:1px;height:15px;background:#dadada;"></div>
<svg class="a" style="left:375.3px;top:256px;" width="10" height="10" viewBox="0 0 10 10"><path d="M4.8 0.6 L9.4 4.9 H7 V8.6 H2.6 V4.9 H0.2 Z" fill="#3d92d8" stroke="#2a6fae" stroke-width="0.5"/></svg>
<svg class="a" style="left:395px;top:256px;" width="10" height="10" viewBox="0 0 10 10"><path d="M4.8 8.8 L9.4 4.5 H7 V0.8 H2.6 V4.5 H0.2 Z" fill="#3d92d8" stroke="#2a6fae" stroke-width="0.5"/></svg>
<div class="btn" style="left:423.5px;top:252px;width:39px;height:17px"></div>
<div class="a " style="left:443.4px;top:253px;width:1px;height:15px;background:#dadada;"></div>
<svg class="a" style="left:427.5px;top:255.5px;" width="11" height="11" viewBox="0 0 11 11"><rect x="3" y="0.5" width="7" height="7" stroke="#5c8a5c" stroke-width="0.9" fill="#d8ead0"/><rect x="0.5" y="3" width="7" height="7" stroke="#5c8a5c" stroke-width="0.9" fill="#a9d39a"/><path d="M1.8 6.3 L3.5 8.2 L6.8 4.3" stroke="#2d7a3a" stroke-width="1.2" fill="none"/></svg>
<svg class="a" style="left:447.5px;top:255.5px;" width="11" height="11" viewBox="0 0 11 11"><rect x="3" y="0.5" width="7" height="7" stroke="#777" stroke-width="0.9" fill="#eee"/><rect x="0.5" y="3" width="7" height="7" stroke="#777" stroke-width="0.9" fill="#fff"/></svg>
<div class="inp" style="left:469.5px;top:252px;width:114.3px;height:17px;border-color:#cfcfcf"></div>
<div class="a " style="left:569.5px;top:253px;width:1px;height:15px;background:#dadada;"></div>
<div class="t" style="left:472px;top:257.00px;font-size:8.5px;color:#cdcdcd;font-weight:400;-webkit-text-stroke:0;">Поиск (Ctrl+F)</div>
<svg class="a" style="left:574.5px;top:259px;" width="4" height="4" viewBox="0 0 4 4"><path d="M0.5 0.5 L3.5 3.5 M3.5 0.5 L0.5 3.5" stroke="#999" stroke-width="0.9"/></svg>
<div class="btn" style="left:590px;top:252px;width:40.5px;height:17px"></div>
<div class="t" style="left:599px;top:257.00px;font-size:8.5px;color:#444;font-weight:400;">Еще</div>
<svg class="a" style="left:621px;top:259.5px;" width="5" height="3" viewBox="0 0 5 3"><path d="M0.5 0.5 H4.5 L2.5 2.8 Z" fill="#555"/></svg>
<div class="a " style="left:238px;top:275px;width:393px;height:312px;border:1px solid #a9a9a9;border-right-color:#cfcfcf;border-bottom-color:#bdbdbd;"></div>
<div class="a " style="left:239.2px;top:276.2px;width:390.5px;height:18px;background:#fcf1c6;"></div>
<div class="a " style="left:255.4px;top:276.4px;width:25.3px;height:18.4px;background:#fbe08c;"></div>
<svg class="a" style="left:245.5px;top:282px;" width="7" height="7" viewBox="0 0 7 7"><circle cx="3.5" cy="3.5" r="3" stroke="#aaa" stroke-width="0.8" fill="none"/><path d="M1.8 3.5 H5.2" stroke="#aaa" stroke-width="0.8"/></svg>
<div class="t" style="left:257.9px;top:282.00px;font-size:8.6px;color:#4a4a3a;font-weight:400;">Поля</div>
<div class="a" style="left:270.2px;top:300.2px;width:9.8px;height:9.8px;border:1px solid #9a9a9a;background:#fff"></div>
<svg class="a" style="left:270.7px;top:299.0px;" width="10.5" height="9" viewBox="0 0 10.5 9"><path d="M1.5 4.8 L4 7.8 L9.5 0.8" stroke="#25915a" stroke-width="1.7" fill="none"/></svg>
<div class="t" style="left:288.0px;top:302.00px;font-size:8.2px;color:#9a9a9a;font-weight:400;">01</div>
<div class="t" style="left:303.6px;top:301.00px;font-size:8.6px;color:#4d4d4d;font-weight:400;">№ п/п</div>
<div class="a" style="left:270.2px;top:319.5px;width:9.8px;height:9.8px;border:1px solid #9a9a9a;background:#fff"></div>
<svg class="a" style="left:270.7px;top:318.3px;" width="10.5" height="9" viewBox="0 0 10.5 9"><path d="M1.5 4.8 L4 7.8 L9.5 0.8" stroke="#25915a" stroke-width="1.7" fill="none"/></svg>
<svg class="a" style="left:287.5px;top:319.8px;" width="9" height="9" viewBox="0 0 9 9"><rect x="0.5" y="1.5" width="8" height="7" stroke="#a8a8a8" stroke-width="0.9" fill="none"/><path d="M0.5 3.5 H8.5 M3 1 V2.5 M6 1 V2.5 M3 5 V8 M6 5 V8 M1 6 H8" stroke="#a8a8a8" stroke-width="0.7"/></svg>
<div class="t" style="left:303.6px;top:320.00px;font-size:8.6px;color:#4d4d4d;font-weight:400;">Дата</div>
<div class="a" style="left:270.2px;top:338.8px;width:9.8px;height:9.8px;border:1px solid #9a9a9a;background:#fff"></div>
<svg class="a" style="left:270.7px;top:337.6px;" width="10.5" height="9" viewBox="0 0 10.5 9"><path d="M1.5 4.8 L4 7.8 L9.5 0.8" stroke="#25915a" stroke-width="1.7" fill="none"/></svg>
<div class="t" style="left:289.0px;top:339.00px;font-size:9.5px;color:#a0a0a0;font-weight:400;font-family:'Liberation Serif',serif;">T</div>
<div class="t" style="left:303.6px;top:340.00px;font-size:8.6px;color:#4d4d4d;font-weight:400;">Номер</div>
<div class="a" style="left:270.2px;top:358.09999999999997px;width:9.8px;height:9.8px;border:1px solid #9a9a9a;background:#fff"></div>
<svg class="a" style="left:288.0px;top:359.4px;" width="10" height="7" viewBox="0 0 10 7"><path d="M1 0.8 L3.8 3.5 L1 6.2 M5 0.8 L7.8 3.5 L5 6.2" stroke="#999" stroke-width="0.9" fill="none"/></svg>
<div class="t" style="left:303.6px;top:359.00px;font-size:8.6px;color:#4d4d4d;font-weight:400;">Ссылка</div>
<div class="a" style="left:270.2px;top:377.4px;width:9.8px;height:9.8px;border:1px solid #9a9a9a;background:#fff"></div>
<svg class="a" style="left:270.7px;top:376.2px;" width="10.5" height="9" viewBox="0 0 10.5 9"><path d="M1.5 4.8 L4 7.8 L9.5 0.8" stroke="#25915a" stroke-width="1.7" fill="none"/></svg>
<div class="t" style="left:289.0px;top:378.00px;font-size:9.5px;color:#a0a0a0;font-weight:400;font-family:'Liberation Serif',serif;">T</div>
<div class="t" style="left:303.6px;top:378.00px;font-size:8.6px;color:#4d4d4d;font-weight:400;">Ссылка.Номер входящего документа</div>
<div class="a" style="left:270.2px;top:396.7px;width:9.8px;height:9.8px;border:1px solid #9a9a9a;background:#fff"></div>
<svg class="a" style="left:270.7px;top:395.5px;" width="10.5" height="9" viewBox="0 0 10.5 9"><path d="M1.5 4.8 L4 7.8 L9.5 0.8" stroke="#25915a" stroke-width="1.7" fill="none"/></svg>
<svg class="a" style="left:288.0px;top:398.0px;" width="10" height="7" viewBox="0 0 10 7"><path d="M1 0.8 L3.8 3.5 L1 6.2 M5 0.8 L7.8 3.5 L5 6.2" stroke="#999" stroke-width="0.9" fill="none"/></svg>
<div class="t" style="left:303.6px;top:398.00px;font-size:8.6px;color:#4d4d4d;font-weight:400;">Контрагент</div>
<div class="a" style="left:270.2px;top:416.0px;width:9.8px;height:9.8px;border:1px solid #9a9a9a;background:#fff"></div>
<svg class="a" style="left:270.7px;top:414.8px;" width="10.5" height="9" viewBox="0 0 10.5 9"><path d="M1.5 4.8 L4 7.8 L9.5 0.8" stroke="#25915a" stroke-width="1.7" fill="none"/></svg>
<div class="t" style="left:288.0px;top:418.00px;font-size:8.2px;color:#9a9a9a;font-weight:400;">01</div>
<div class="t" style="left:303.6px;top:417.00px;font-size:8.6px;color:#4d4d4d;font-weight:400;">Сумма документа</div>
<div class="a" style="left:270.2px;top:435.3px;width:9.8px;height:9.8px;border:1px solid #9a9a9a;background:#fff"></div>
<svg class="a" style="left:290.0px;top:436.6px;" width="6" height="7" viewBox="0 0 6 7"><path d="M1 0.8 L3.8 3.5 L1 6.2" stroke="#999" stroke-width="0.9" fill="none"/></svg>
<div class="t" style="left:303.6px;top:436.00px;font-size:8.6px;color:#4d4d4d;font-weight:400;">Валюта</div>
<div class="a" style="left:270.2px;top:454.59999999999997px;width:9.8px;height:9.8px;border:1px solid #9a9a9a;background:#fff"></div>
<svg class="a" style="left:270.7px;top:453.4px;" width="10.5" height="9" viewBox="0 0 10.5 9"><path d="M1.5 4.8 L4 7.8 L9.5 0.8" stroke="#25915a" stroke-width="1.7" fill="none"/></svg>
<svg class="a" style="left:288.0px;top:455.9px;" width="10" height="7" viewBox="0 0 10 7"><path d="M1 0.8 L3.8 3.5 L1 6.2 M5 0.8 L7.8 3.5 L5 6.2" stroke="#999" stroke-width="0.9" fill="none"/></svg>
<div class="t" style="left:303.6px;top:455.00px;font-size:8.6px;color:#4d4d4d;font-weight:400;">Менеджер</div>
<div class="a" style="left:270.2px;top:473.90000000000003px;width:9.8px;height:9.8px;border:1px solid #9a9a9a;background:#fff"></div>
<svg class="a" style="left:290.0px;top:475.20000000000005px;" width="6" height="7" viewBox="0 0 6 7"><path d="M1 0.8 L3.8 3.5 L1 6.2" stroke="#999" stroke-width="0.9" fill="none"/></svg>
<div class="t" style="left:303.6px;top:475.00px;font-size:8.6px;color:#4d4d4d;font-weight:400;">Организация</div>
<div class="a" style="left:270.2px;top:493.2px;width:9.8px;height:9.8px;border:1px solid #9a9a9a;background:#fff"></div>
<svg class="a" style="left:290.0px;top:494.5px;" width="6" height="7" viewBox="0 0 6 7"><path d="M1 0.8 L3.8 3.5 L1 6.2" stroke="#999" stroke-width="0.9" fill="none"/></svg>
<div class="t" style="left:303.6px;top:494.00px;font-size:8.6px;color:#4d4d4d;font-weight:400;">Подразделение</div>
<div class="a" style="left:270.2px;top:512.5px;width:9.8px;height:9.8px;border:1px solid #9a9a9a;background:#fff"></div>
<svg class="a" style="left:290.0px;top:513.8px;" width="6" height="7" viewBox="0 0 6 7"><path d="M1 0.8 L3.8 3.5 L1 6.2" stroke="#999" stroke-width="0.9" fill="none"/></svg>
<div class="t" style="left:303.6px;top:513.00px;font-size:8.6px;color:#4d4d4d;font-weight:400;">Склад</div>
<div class="a" style="left:270.2px;top:531.8000000000001px;width:9.8px;height:9.8px;border:1px solid #9a9a9a;background:#fff"></div>
<svg class="a" style="left:270.7px;top:530.6px;" width="10.5" height="9" viewBox="0 0 10.5 9"><path d="M1.5 4.8 L4 7.8 L9.5 0.8" stroke="#25915a" stroke-width="1.7" fill="none"/></svg>
<div class="t" style="left:289.0px;top:532.00px;font-size:9.5px;color:#a0a0a0;font-weight:400;font-family:'Liberation Serif',serif;">T</div>
<div class="t" style="left:303.6px;top:533.00px;font-size:8.6px;color:#4d4d4d;font-weight:400;">Комментарий</div>
<div class="btn" style="left:637px;top:386px;width:20px;height:17.5px"></div>
<svg class="a" style="left:642px;top:389.5px;" width="10" height="10" viewBox="0 0 10 10"><path d="M9.6 5 L4.8 0.3 V3 H1 V7 H4.8 V9.7 Z" fill="#3d92d8" stroke="#2a6fae" stroke-width="0.5"/></svg>
<div class="btn" style="left:637px;top:410px;width:20px;height:17.5px"></div>
<svg class="a" style="left:642px;top:413.5px;" width="10" height="10" viewBox="0 0 10 10"><path d="M0.4 5 L5.2 0.3 V3 H9 V7 H5.2 V9.7 Z" fill="#3d92d8" stroke="#2a6fae" stroke-width="0.5"/></svg>
<div class="btn" style="left:637px;top:434px;width:20px;height:17.5px"></div>
<svg class="a" style="left:641.5px;top:437.5px;" width="11" height="10" viewBox="0 0 11 10"><path d="M3 5 L7 1 V3.3 H10.4 V6.7 H7 V9 Z" fill="#3d92d8" stroke="#2a6fae" stroke-width="0.5"/><path d="M3.6 1.5 L0.6 5 L3.6 8.5" stroke="#3d92d8" stroke-width="1.1" fill="none"/></svg>
<div class="btn" style="left:664px;top:252px;width:66.5px;height:17px"></div>
<svg class="a" style="left:668.3px;top:256px;" width="10" height="10" viewBox="0 0 10 10"><circle cx="5" cy="5" r="4.7" fill="#3aa845"/><path d="M5 2.3 V7.7 M2.3 5 H7.7" stroke="#fff" stroke-width="1.6"/></svg>
<div class="t" style="left:683.3px;top:257.00px;font-size:8.5px;color:#444;font-weight:400;">Добавить</div>
<div class="btn" style="left:737px;top:252px;width:19.5px;height:17px"></div>
<svg class="a" style="left:741.8px;top:256px;" width="10" height="10" viewBox="0 0 10 10"><circle cx="5" cy="5" r="4.7" fill="#d4213a"/><path d="M3.2 3.2 L6.8 6.8 M6.8 3.2 L3.2 6.8" stroke="#fff" stroke-width="1.4"/></svg>
<div class="btn" style="left:770.2px;top:252px;width:39.2px;height:17px"></div>
<div class="a " style="left:790.1px;top:253px;width:1px;height:15px;background:#dadada;"></div>
<svg class="a" style="left:775.2px;top:256px;" width="10" height="10" viewBox="0 0 10 10"><path d="M4.8 0.6 L9.4 4.9 H7 V8.6 H2.6 V4.9 H0.2 Z" fill="#3d92d8" stroke="#2a6fae" stroke-width="0.5"/></svg>
<svg class="a" style="left:795px;top:256px;" width="10" height="10" viewBox="0 0 10 10"><path d="M4.8 8.8 L9.4 4.5 H7 V0.8 H2.6 V4.5 H0.2 Z" fill="#3d92d8" stroke="#2a6fae" stroke-width="0.5"/></svg>
<div class="btn" style="left:823.4px;top:252px;width:39.6px;height:17px"></div>
<div class="a " style="left:843.4px;top:253px;width:1px;height:15px;background:#dadada;"></div>
<svg class="a" style="left:827.5px;top:254.5px;" width="13" height="12" viewBox="0 0 13 12"><text x="0" y="5.5" font-size="6" font-family="Liberation Sans" fill="#2d6fa8">А</text><text x="0" y="11.5" font-size="6" font-family="Liberation Sans" fill="#d0283a">Я</text><path d="M9.5 2.5 V10.5 M8 8.8 L9.5 10.8 L11 8.8" stroke="#333" stroke-width="0.9" fill="none"/></svg>
<svg class="a" style="left:847.5px;top:254.5px;" width="13" height="12" viewBox="0 0 13 12"><text x="0" y="5.5" font-size="6" font-family="Liberation Sans" fill="#d0283a">Я</text><text x="0" y="11.5" font-size="6" font-family="Liberation Sans" fill="#2d6fa8">А</text><path d="M9.5 2.5 V10.5 M8 8.8 L9.5 10.8 L11 8.8" stroke="#333" stroke-width="0.9" fill="none"/></svg>
<div class="btn" style="left:876.7px;top:252px;width:39.6px;height:17px"></div>
<div class="a " style="left:896.6px;top:253px;width:1px;height:15px;background:#dadada;"></div>
<svg class="a" style="left:880.7px;top:255.5px;" width="11" height="11" viewBox="0 0 11 11"><rect x="3" y="0.5" width="7" height="7" stroke="#5c8a5c" stroke-width="0.9" fill="#d8ead0"/><rect x="0.5" y="3" width="7" height="7" stroke="#5c8a5c" stroke-width="0.9" fill="#a9d39a"/><path d="M1.8 6.3 L3.5 8.2 L6.8 4.3" stroke="#2d7a3a" stroke-width="1.2" fill="none"/></svg>
<svg class="a" style="left:900.7px;top:255.5px;" width="11" height="11" viewBox="0 0 11 11"><rect x="3" y="0.5" width="7" height="7" stroke="#777" stroke-width="0.9" fill="#eee"/><rect x="0.5" y="3" width="7" height="7" stroke="#777" stroke-width="0.9" fill="#fff"/></svg>
<div class="inp" style="left:922.7px;top:252px;width:114.1px;height:17px;border-color:#cfcfcf"></div>
<div class="a " style="left:1022.8px;top:253px;width:1px;height:15px;background:#dadada;"></div>
<div class="t" style="left:925.5px;top:257.00px;font-size:8.5px;color:#cdcdcd;font-weight:400;-webkit-text-stroke:0;">Поиск (Ctrl+F)</div>
<svg class="a" style="left:1028px;top:259px;" width="4" height="4" viewBox="0 0 4 4"><path d="M0.5 0.5 L3.5 3.5 M3.5 0.5 L0.5 3.5" stroke="#999" stroke-width="0.9"/></svg>
<div class="a " style="left:664px;top:275px;width:374px;height:312px;border:1px solid #a9a9a9;border-right-color:#cfcfcf;border-bottom-color:#bdbdbd;"></div>
<div class="a " style="left:665.2px;top:276.2px;width:280px;height:18px;background:#fcf1c6;"></div>
<div class="a " style="left:682.5px;top:276.4px;width:48.5px;height:18.4px;background:#fbe08c;"></div>
<svg class="a" style="left:671px;top:282px;" width="7" height="7" viewBox="0 0 7 7"><circle cx="3.5" cy="3.5" r="3" stroke="#aaa" stroke-width="0.8" fill="none"/><path d="M1.8 3.5 H5.2" stroke="#aaa" stroke-width="0.8"/></svg>
<div class="t" style="left:684.3px;top:282.00px;font-size:8.6px;color:#4a4a3a;font-weight:400;">Сортировки</div>
<div class="a" style="left:696.2px;top:300.2px;width:9.8px;height:9.8px;border:1px solid #9a9a9a;background:#fff"></div>
<svg class="a" style="left:696.7px;top:299.0px;" width="10.5" height="9" viewBox="0 0 10.5 9"><path d="M1.5 4.8 L4 7.8 L9.5 0.8" stroke="#25915a" stroke-width="1.7" fill="none"/></svg>
<svg class="a" style="left:713px;top:300.5px;" width="9" height="9" viewBox="0 0 9 9"><rect x="0.5" y="1.5" width="8" height="7" stroke="#a8a8a8" stroke-width="0.9" fill="none"/><path d="M0.5 3.5 H8.5 M3 1 V2.5 M6 1 V2.5 M3 5 V8 M6 5 V8 M1 6 H8" stroke="#a8a8a8" stroke-width="0.7"/></svg>
<div class="t" style="left:729px;top:301.00px;font-size:8.6px;color:#4d4d4d;font-weight:400;">Дата</div>
<div class="t" style="left:950.3px;top:301.00px;font-size:8.6px;color:#4d4d4d;font-weight:400;text-decoration:underline;">По возрастанию</div>
<div class="a" style="left:696.2px;top:319.5px;width:9.8px;height:9.8px;border:1px solid #9a9a9a;background:#fff"></div>
<svg class="a" style="left:696.7px;top:318.3px;" width="10.5" height="9" viewBox="0 0 10.5 9"><path d="M1.5 4.8 L4 7.8 L9.5 0.8" stroke="#25915a" stroke-width="1.7" fill="none"/></svg>
<div class="t" style="left:714.5px;top:320.00px;font-size:9.5px;color:#a0a0a0;font-weight:400;font-family:'Liberation Serif',serif;">T</div>
<div class="t" style="left:729px;top:320.00px;font-size:8.6px;color:#4d4d4d;font-weight:400;">Номер</div>
<div class="t" style="left:950.3px;top:320.00px;font-size:8.6px;color:#4d4d4d;font-weight:400;text-decoration:underline;">По возрастанию</div>
<svg class="a" style="left:237.8px;top:593.2px;" width="11" height="11" viewBox="0 0 11 11"><circle cx="5.5" cy="5.5" r="4.8" stroke="#555" stroke-width="1" fill="none"/><path d="M5.5 4.5 V8.5" stroke="#555" stroke-width="1.3"/><circle cx="5.5" cy="2.9" r="0.7" fill="#555"/></svg>
<div class="a " style="left:255.3px;top:593px;width:456.5px;height:11.5px;background:#fde48c;"></div>
<div class="t" style="left:256.5px;top:595px;font-size:8.55px;color:#8a6418">На странице <b style="color:#5a4510">Структура</b> для группировок отчета выбраны поля и сортировки, которые имеют больший приоритет.</div>
<div class="t" style="left:231px;top:622.00px;font-size:8.5px;color:#666;font-weight:400;">Вид:</div>
<div class="a" style="left:252.5px;top:618px;width:118px;height:16.6px;border:1px solid #c4c4c4;border-radius:2px;background:#fff;box-shadow:0 1px 1px rgba(0,0,0,.1)"></div>
<div class="a " style="left:253.5px;top:619px;width:45px;height:14.6px;background:linear-gradient(#f4f4f4,#e4e4e4);"></div>
<div class="a " style="left:298.4px;top:619px;width:1px;height:14.6px;background:#c4c4c4;"></div>
<div class="t" style="left:258.5px;top:622.00px;font-size:8.5px;color:#555;font-weight:400;">Простой</div>
<div class="t" style="left:305.5px;top:622.00px;font-size:8.5px;color:#2c8f5c;font-weight:400;">Расширенный</div>
<div class="t" style="left:374.3px;top:622.00px;font-size:8.8px;color:#3b7ab5;font-weight:700;-webkit-text-stroke:0;">?</div>
<div class="a" style="left:866px;top:617px;width:131.5px;height:17.6px;border:1px solid #c9a800;border-radius:2px;background:linear-gradient(#ffe94a,#f8d400);box-shadow:0 1px 1px rgba(0,0,0,.15)"></div>
<div class="t" style="left:875.5px;top:622.00px;font-size:8.67px;color:#333;font-weight:700;-webkit-text-stroke:0;">Закрыть и сформировать</div>
<div class="btn" style="left:1004.5px;top:617px;width:40px;height:17.6px"></div>
<div class="t" style="left:1013.5px;top:622.00px;font-size:8.5px;color:#444;font-weight:400;">Еще</div>
<svg class="a" style="left:1035.5px;top:625px;" width="5" height="3" viewBox="0 0 5 3"><path d="M0.5 0.5 H4.5 L2.5 2.8 Z" fill="#555"/></svg>
<div class="a " style="left:0px;top:692.5px;width:1280px;height:27.5px;background:#1f1f1f;"></div>
<div class="a " style="left:229.7px;top:692.5px;width:31.6px;height:27.5px;background:#3b3b3b;"></div>
<div class="a " style="left:166px;top:718.5px;width:27px;height:1.5px;background:#7eb3e0;"></div>
<div class="a " style="left:199px;top:718.5px;width:27px;height:1.5px;background:#7eb3e0;"></div>
<div class="a " style="left:229.7px;top:718.5px;width:31.6px;height:1.5px;background:#7eb3e0;"></div>
<div class="a " style="left:265px;top:718.5px;width:27px;height:1.5px;background:#7eb3e0;"></div>
<svg class="a" style="left:10px;top:700.5px;" width="12" height="11.5" viewBox="0 0 12 11.5"><path d="M0 1.7 L4.8 1.0 V5.4 H0 Z M5.6 0.9 L12 0 V5.4 H5.6 Z M0 6.1 H4.8 V10.5 L0 9.8 Z M5.6 6.1 H12 V11.5 L5.6 10.6 Z" fill="#fff"/></svg>
<svg class="a" style="left:42px;top:701px;" width="14" height="11" viewBox="0 0 14 11"><path d="M0.5 0.5 H9.5 M0.5 10.5 H9.5" stroke="#ddd" stroke-width="1"/><rect x="1" y="2.5" width="8" height="6" stroke="#ddd" stroke-width="1.2" fill="none"/><rect x="11.5" y="0" width="1.8" height="1.8" fill="#ddd"/><rect x="11.5" y="3" width="1.8" height="8" fill="#ddd"/></svg>
<svg class="a" style="left:73.5px;top:698.5px;" width="17" height="17" viewBox="0 0 17 17"><defs><linearGradient id="eg" x1="0.2" y1="1" x2="0.9" y2="0.1"><stop offset="0" stop-color="#1565d8"/><stop offset="0.55" stop-color="#1b8fe0"/><stop offset="1" stop-color="#4fd07a"/></linearGradient></defs><circle cx="8.5" cy="8.5" r="8.2" fill="url(#eg)"/><ellipse cx="9.3" cy="9.6" rx="3.6" ry="2.6" fill="#1a2a3a"/><path d="M5.5 9.5 C5.8 7.3 7.5 6.3 9.5 6.5 C11.5 6.7 13 8 13.2 9.2" stroke="#4fd07a" stroke-width="1" fill="none" opacity="0.6"/></svg>
<svg class="a" style="left:106.5px;top:699px;" width="16" height="14" viewBox="0 0 16 14"><rect x="0.5" y="1" width="6" height="3" fill="#f0c040"/><rect x="0.5" y="3" width="15" height="10.5" fill="#f4cf5a"/><rect x="3" y="7" width="10" height="3.5" fill="#3a8fd0"/></svg>
<svg class="a" style="left:139.5px;top:698px;" width="15.5" height="16" viewBox="0 0 15.5 16"><rect x="0.5" y="3.5" width="14.5" height="12" rx="1.5" fill="#f2f2f2"/><path d="M4.5 3.5 V2 A3 3 0 0 1 10.5 2 V3.5" stroke="#f2f2f2" stroke-width="1.2" fill="none"/><rect x="4.5" y="6.5" width="3" height="3" fill="#f25022"/><rect x="8" y="6.5" width="3" height="3" fill="#7fba00"/><rect x="4.5" y="10" width="3" height="3" fill="#00a4ef"/><rect x="8" y="10" width="3" height="3" fill="#ffb900"/></svg>
<svg class="a" style="left:172px;top:697.5px;" width="17" height="17" viewBox="0 0 17 17"><circle cx="8.5" cy="8.5" r="8.2" fill="#fff"/><path d="M5 3.5 L8.5 9 L12 3.5 M8.5 9 V14" stroke="#e0302a" stroke-width="2" fill="none"/></svg>
<svg class="a" style="left:204px;top:697px;" width="19" height="18" viewBox="0 0 19 18"><rect x="6" y="0.5" width="12" height="9" fill="#1e7ad6"/><rect x="0.5" y="4" width="9" height="9" rx="1" fill="#1066c0"/><circle cx="5" cy="8.5" r="2.6" stroke="#fff" stroke-width="1.4" fill="none"/><rect x="9" y="10" width="9.5" height="7.5" fill="#f0c87a"/><path d="M9 10 L13.75 14 L18.5 10" stroke="#c7964a" stroke-width="0.8" fill="none"/></svg>
<svg class="a" style="left:237.5px;top:697.5px;" width="17" height="17" viewBox="0 0 17 17"><circle cx="8.5" cy="8.5" r="8.2" fill="#ffd93b"/><text x="3" y="11.5" font-size="7" font-weight="700" font-family="Liberation Sans" fill="#d9262b">1С</text></svg>
<svg class="a" style="left:270.5px;top:698px;" width="16" height="16" viewBox="0 0 16 16"><circle cx="8" cy="8" r="7.8" fill="#2aa3de"/><path d="M3.5 7.8 L12 4.5 L10.5 12 L7.5 10 L6.5 11.5 L6.5 9.5 L10.5 6 L5.5 9 Z" fill="#fff"/></svg>
<svg class="a" style="left:1116px;top:703.5px;" width="10" height="6" viewBox="0 0 10 6"><path d="M0.8 5.2 L5 1 L9.2 5.2" stroke="#ddd" stroke-width="1.1" fill="none"/></svg>
<svg class="a" style="left:1131.5px;top:701px;" width="11" height="11" viewBox="0 0 11 11"><rect x="2.5" y="1" width="8" height="6" stroke="#ddd" stroke-width="1" fill="#ddd"/><path d="M6.5 7 V9.5 M3.5 10 H9.5" stroke="#ddd" stroke-width="1"/><rect x="0" y="1" width="3" height="4" fill="#ddd"/></svg>
<svg class="a" style="left:1147px;top:700.5px;" width="11.5" height="12" viewBox="0 0 11.5 12"><rect x="2.5" y="1.5" width="8.5" height="6.5" stroke="#ddd" stroke-width="1" fill="none"/><path d="M6.5 8 V10.5 M3.5 11 H9.5" stroke="#ddd" stroke-width="1"/><path d="M0.5 0.5 V4 H3" stroke="#ddd" stroke-width="1" fill="none"/></svg>
<svg class="a" style="left:1162.5px;top:701px;" width="12" height="11" viewBox="0 0 12 11"><path d="M0.5 3.5 H2.5 L5.5 1 V10 L2.5 7.5 H0.5 Z" stroke="#ddd" stroke-width="1" fill="none"/><path d="M7.5 3.5 Q8.5 5.5 7.5 7.5 M9.2 2 Q11 5.5 9.2 9" stroke="#ddd" stroke-width="0.9" fill="none"/></svg>
<div class="t" style="left:1181.6px;top:702.00px;font-size:8.6px;color:#eee;font-weight:400;transform:scaleX(0.85);transform-origin:0 0;">РУС</div>
<div class="t" style="left:1222.7px;top:696.00px;font-size:8.3px;color:#eee;font-weight:400;transform:translateX(-50%);transform:translateX(-50%) scaleX(0.86);">10:34</div>
<div class="t" style="left:1222.7px;top:708.00px;font-size:8.3px;color:#eee;font-weight:400;transform:translateX(-50%);transform:translateX(-50%) scaleX(0.86);">20.01.2026</div>
<svg class="a" style="left:1252px;top:699px;" width="18" height="17" viewBox="0 0 18 17"><path d="M0.8 1 H12 V9.5 H4 L2 12 V9.5 H0.8 Z" fill="#eee"/><path d="M2.5 3.5 H10 M2.5 5.5 H10 M2.5 7.5 H8" stroke="#1f1f1f" stroke-width="0.9"/><circle cx="12" cy="11.5" r="5" fill="#1f1f1f" stroke="#ddd" stroke-width="0.8"/><text x="8.2" y="14.3" font-size="7.5" font-family="Liberation Sans" fill="#eee">21</text></svg>
<div class="a " style="left:1276.5px;top:692.5px;width:1px;height:27.5px;background:#555;"></div></body></html>
